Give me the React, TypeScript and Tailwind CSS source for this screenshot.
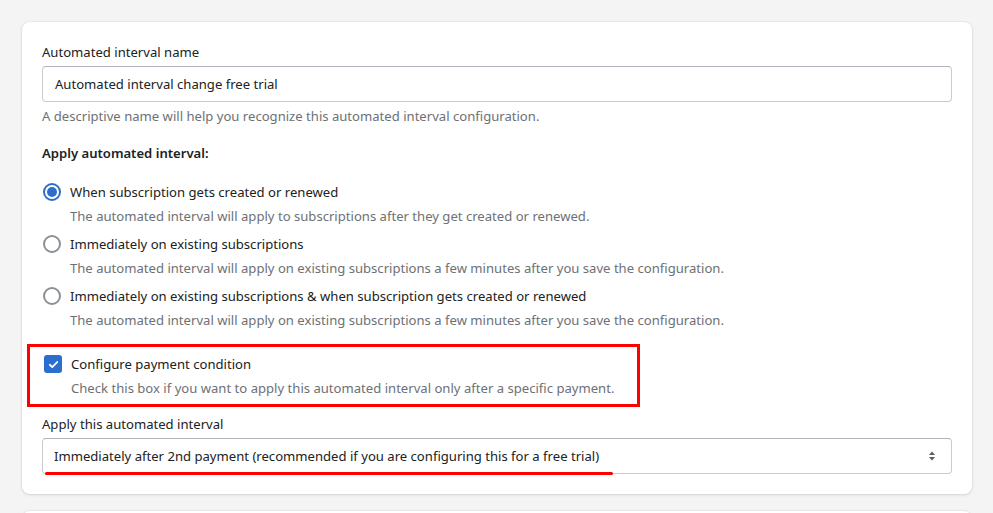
import { useState } from 'react';

const radios = [
  {
    label: 'When subscription gets created or renewed',
    help: 'The automated interval will apply to subscriptions after they get created or renewed.',
  },
  {
    label: 'Immediately on existing subscriptions',
    help: 'The automated interval will apply on existing subscriptions a few minutes after you save the configuration.',
  },
  {
    label: 'Immediately on existing subscriptions & when subscription gets created or renewed',
    help: 'The automated interval will apply on existing subscriptions a few minutes after you save the configuration.',
  },
];

function Radio({ checked }: { checked: boolean }) {
  return checked ? (
    <span className="flex h-[18px] w-[18px] shrink-0 items-center justify-center rounded-full border-2 border-[#2c6ecb]">
      <span className="h-[10px] w-[10px] rounded-full bg-[#2c6ecb]" />
    </span>
  ) : (
    <span className="h-[18px] w-[18px] shrink-0 rounded-full border-2 border-[#8c9196] bg-white" />
  );
}

export default function App() {
  const [selected, setSelected] = useState(0);

  return (
    <div className="h-[513px] overflow-hidden bg-[#f4f4f4] px-[22px] pt-[22px] text-[13.1px] leading-[20px] text-[#202223] [font-family:'Noto_Sans',sans-serif]">
      <div className="w-[950px] rounded-lg bg-white px-5 pt-[20px] pb-[20px] shadow-[0_0_0_1px_rgba(63,63,68,0.04),0_1px_3px_rgba(63,63,68,0.15)]">
        <label className="block">Automated interval name</label>
        <div className="mt-[4px] flex h-[36px] items-center rounded border border-[#c9cccf] border-t-[#aeb4b9] px-3">
          Automated interval change free trial
        </div>
        <p className="mt-[4px] text-[#6d7175]">
          A descriptive name will help you recognize this automated interval configuration.
        </p>

        <h3 className="mt-[17px] font-semibold">Apply automated interval:</h3>

        <div className="mt-[17px] flex flex-col gap-[6px]">
          {radios.map((r, i) => (
            <div key={i} onClick={() => setSelected(i)}>
              <div className="flex h-[24px] items-center gap-[9px] pl-px">
                <Radio checked={selected === i} />
                <span>{r.label}</span>
              </div>
              <p className="mt-[2px] pl-7 text-[#6d7175]">{r.help}</p>
            </div>
          ))}
        </div>

        <div className="mt-[14px] -ml-[15px] w-[613px] border-[3px] border-[#ff0000] pt-[5px] pb-[6px] pl-[13px]">
          <div className="flex h-[24px] items-center gap-[9px] pl-px">
            <span className="flex h-[18px] w-[18px] items-center justify-center rounded-[3px] bg-[#2c6ecb]">
              <svg viewBox="0 0 12 12" className="h-[11px] w-[11px]" fill="none">
                <path d="M2 6.3l2.6 2.5L10 3.3" stroke="white" strokeWidth="2" strokeLinecap="round" strokeLinejoin="round" />
              </svg>
            </span>
            <span>Configure payment condition</span>
          </div>
          <p className="mt-[2px] pl-7 text-[#6d7175]">
            Check this box if you want to apply this automated interval only after a specific payment.
          </p>
        </div>

        <label className="mt-[7px] block">Apply this automated interval</label>
        <div className="relative mt-[4px] flex h-[36px] items-center justify-between rounded border border-[#c9cccf] border-t-[#aeb4b9] pr-[14px] pl-[11px]">
          <span>Immediately after 2nd payment (recommended if you are configuring this for a free trial)</span>
          <svg viewBox="0 0 10 14" className="h-[14px] w-[10px]" fill="#5c5f62">
            <path d="M5 2.5L8 6H2z" />
            <path d="M5 11.5L2 8h6z" />
          </svg>
          <span className="absolute -bottom-[2px] left-[2px] h-[3px] w-[568px] rounded-full bg-[#ff0000]" />
        </div>
      </div>
      <div className="mt-[17px] h-[40px] w-[950px] rounded-t-lg bg-white shadow-[0_0_0_1px_rgba(63,63,68,0.04),0_1px_3px_rgba(63,63,68,0.15)]" />
    </div>
  );
}
